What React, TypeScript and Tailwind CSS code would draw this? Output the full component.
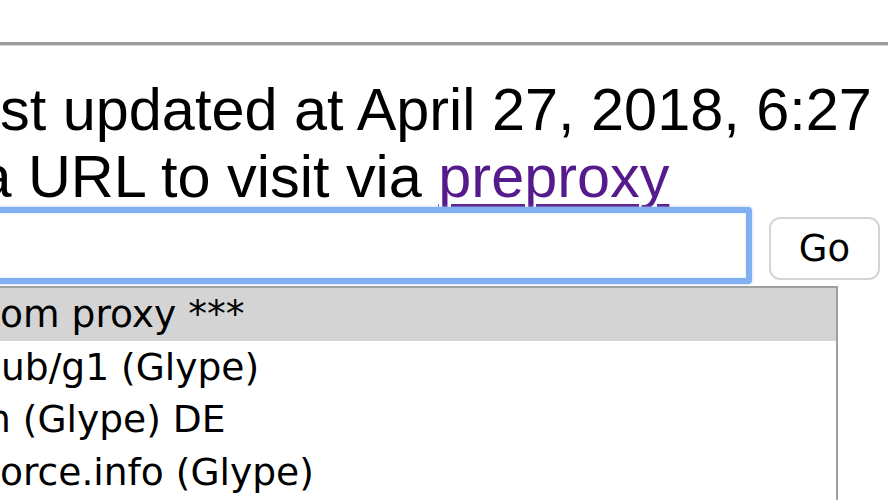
export default function App() {
  const options = [
    { label: "om proxy ***", offset: "ml-[-2px]", selected: true },
    { label: "ub/g1 (Glype)", offset: "ml-[-1px]", selected: false },
    { label: "n (Glype) DE", offset: "ml-[-15px]", selected: false },
    { label: "orce.info (Glype)", offset: "ml-[-2px]", selected: false },
    { label: "", offset: "", selected: false },
  ];

  return (
    <div className="h-[500px] w-[888px] overflow-hidden bg-white font-['Liberation_Sans',Arial,sans-serif] text-black">
      {/* rule */}
      <div className="pt-[42px]">
        <div className="h-[3px] bg-[#9c9c9c]" />
        <div className="h-px bg-[#d8d8d8]" />
      </div>

      <div className="mt-[30px] whitespace-nowrap text-[59.4px] leading-[67px]">
        <p className="ml-[-66px]">Last updated at April 27, 2018, 6:27</p>
        <p className="ml-[-180px]">
          Enter a URL to visit via{" "}
          <a
            href="#"
            className="text-[#551a8b] underline decoration-[3px] underline-offset-[7px]"
          >
            preproxy
          </a>
        </p>
      </div>

      <div className="mt-[-3px] flex items-start">
        <div className="ml-[-100px] h-[77px] w-[852px] shrink-0 rounded-[4px] border-[6px] border-[#80b0f2] bg-white shadow-[0_0_3px_#a9c9f6,inset_0_0_2px_#c3dafa]" />
        <button className="ml-[17px] mt-[10px] flex h-[63px] w-[111px] shrink-0 items-center justify-center rounded-[11px] border-2 border-[#d4d4d4] bg-white font-['DejaVu_Sans',sans-serif] text-[37px] text-black">
          Go
        </button>
      </div>

      <div className="ml-[-100px] mt-[2px] w-[938px] border-2 border-[#a0a0a0] bg-white font-['DejaVu_Sans',sans-serif] text-[37.6px]">
        {options.map((o, i) => (
          <div
            key={i}
            className={`h-[52.5px] overflow-hidden whitespace-nowrap pl-[100px] leading-[52.5px] ${
              o.selected ? "bg-[#d4d4d4]" : ""
            }`}
          >
            <span className={`inline-block ${o.offset}`}>{o.label}</span>
          </div>
        ))}
      </div>
    </div>
  );
}
